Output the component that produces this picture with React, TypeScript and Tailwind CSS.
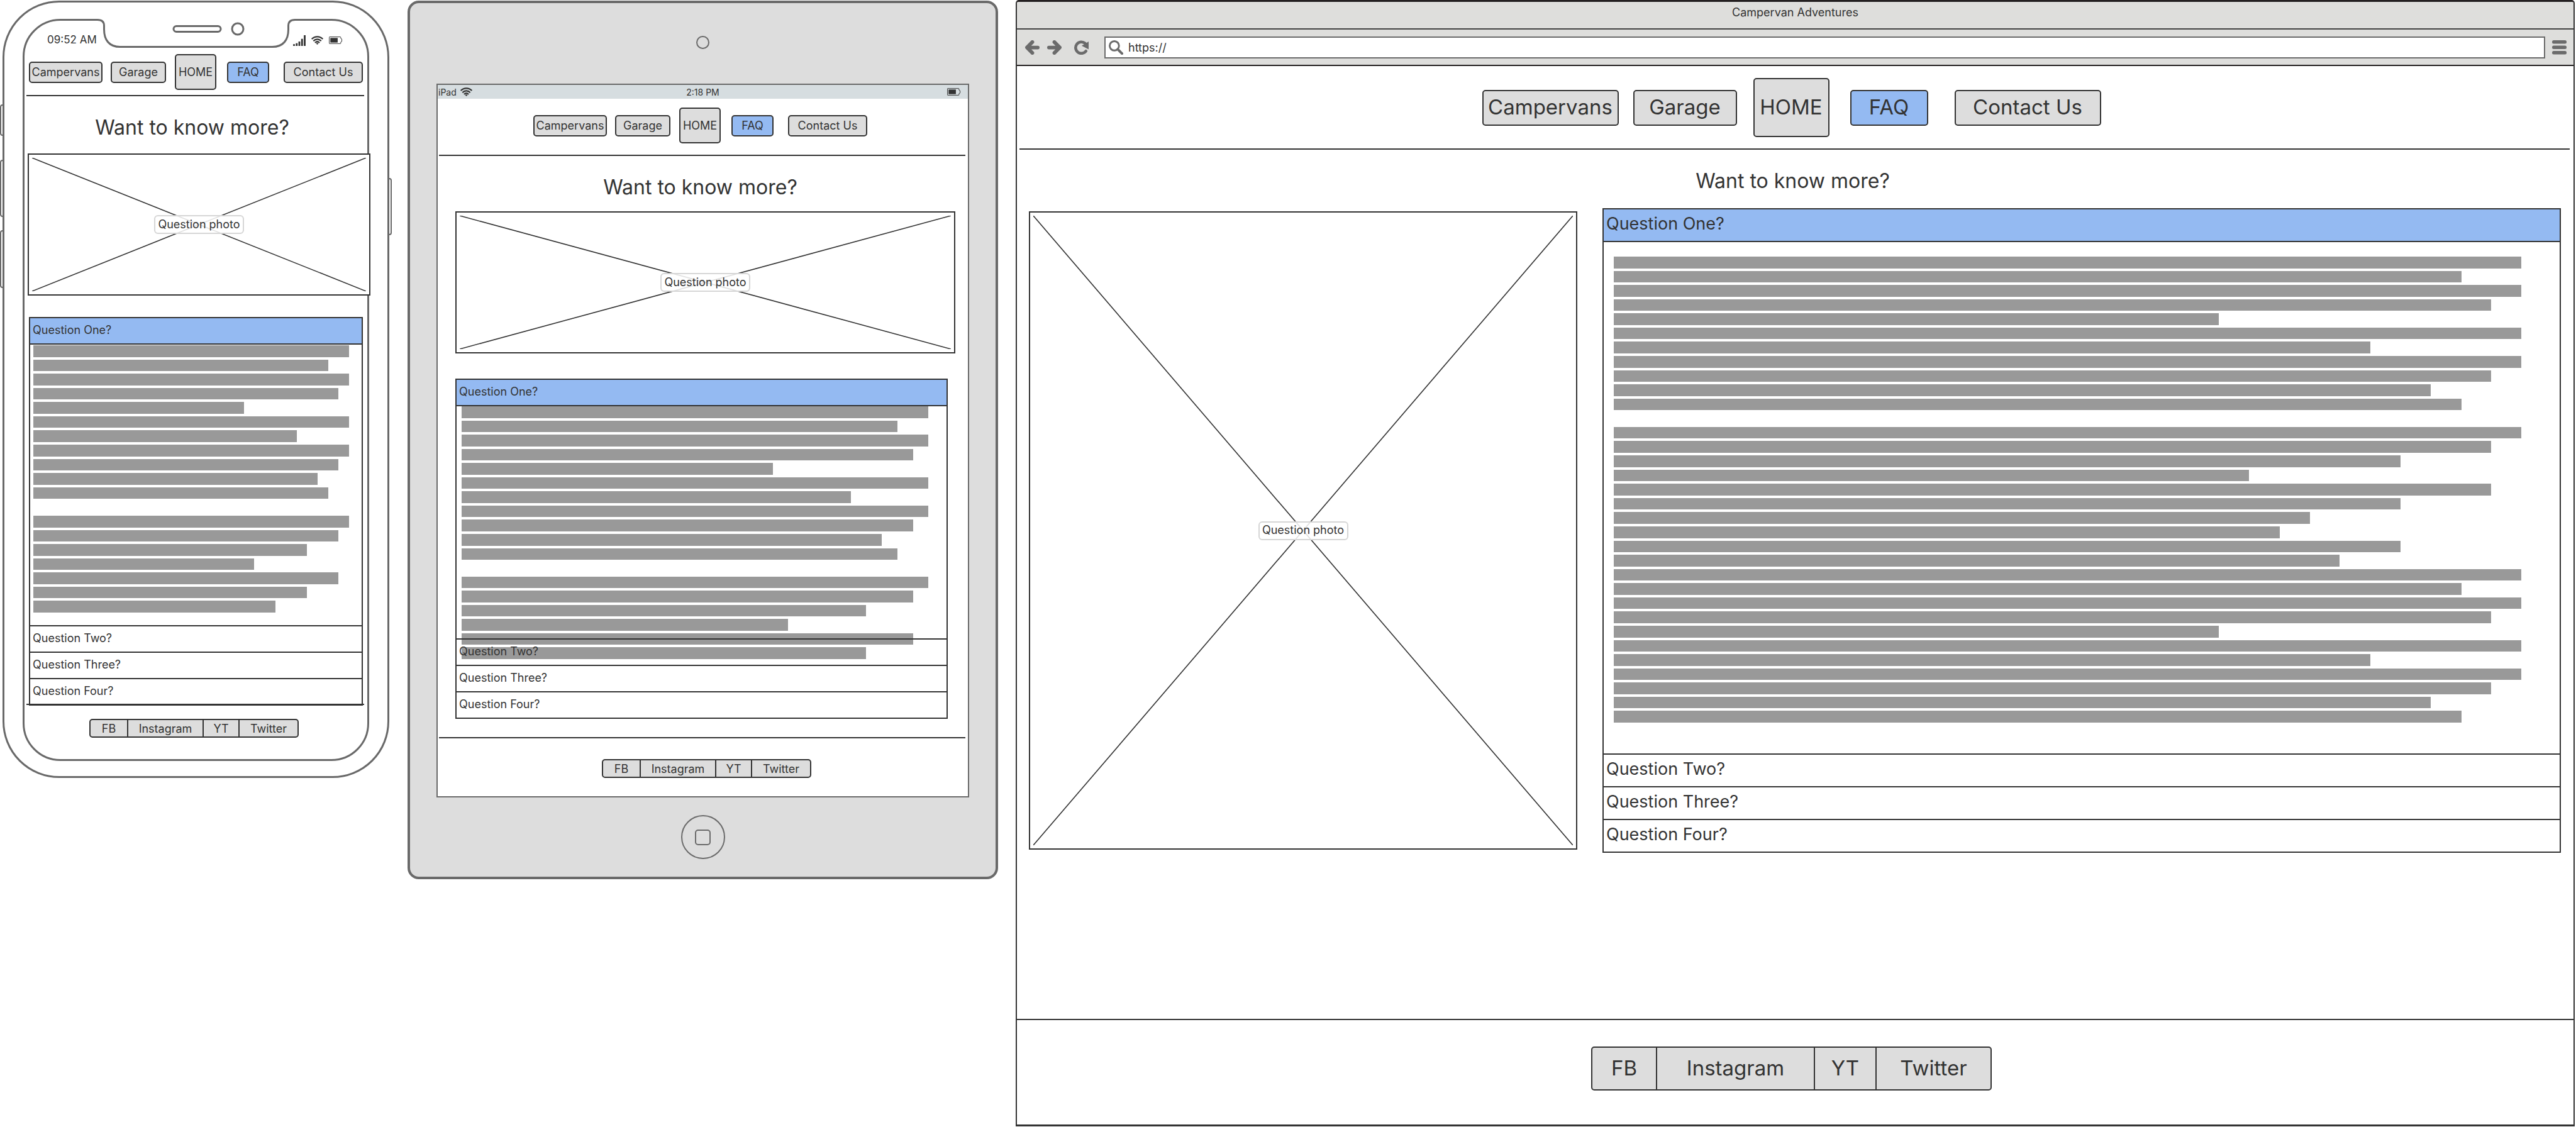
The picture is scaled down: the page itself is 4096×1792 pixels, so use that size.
import React from "react";
import clsx from "clsx";

type Size = "sm" | "lg";

/* Widths of the placeholder text lines, in percent; 0 is a paragraph break. */
const PARAGRAPH = [100, 93.4, 100, 96.7, 66.7, 100, 83.4, 100, 96.7, 90, 93.4, 0];
const PHONE_LINES = [...PARAGRAPH, 100, 96.7, 86.7, 70, 96.7, 86.7, 76.7];
const TABLET_LINES = [...PARAGRAPH, 100, 96.7, 86.7, 70, 96.7, 86.7];
const DESKTOP_LINES = [
  ...PARAGRAPH, 100, 96.7, 86.7, 70, 96.7, 86.7, 76.7, 73.4, 86.7, 80,
  100, 93.4, 100, 96.7, 66.7, 100, 83.4, 100, 96.7, 90, 93.4,
];

const NAV = [
  { label: "Campervans", sm: "w-[117px]", lg: "w-[217px]" },
  { label: "Garage", sm: "w-[88px] ml-[13px]", lg: "w-[165px] ml-[23px]" },
  { label: "HOME", sm: "w-[66px] ml-[14px]", lg: "w-[121px] ml-[26px]" },
  { label: "FAQ", sm: "w-[67px] ml-[17px]", lg: "w-[124px] ml-[33px]" },
  { label: "Contact Us", sm: "w-[126px] ml-[23px]", lg: "w-[233px] ml-[42px]" },
];

const SOCIAL = [
  { label: "FB", sm: "w-[60px]", lg: "w-[103px]" },
  { label: "Instagram", sm: "w-[120px]", lg: "w-[251px]" },
  { label: "YT", sm: "w-[57px]", lg: "w-[98px]" },
  { label: "Twitter", sm: "w-[92px]", lg: "w-[181px]" },
];

function Nav({ size }: { size: Size }) {
  return (
    <nav className="flex items-center justify-center">
      {NAV.map((item) => (
        <button
          key={item.label}
          className={clsx(
            "shrink-0 whitespace-nowrap rounded-[5px] border-2 border-[#333]",
            item.label === "FAQ" ? "bg-[#94baf2]" : "bg-[#ddd]",
            size === "sm" ? "text-[18px]" : "text-[33px]",
            size === "sm"
              ? item.label === "HOME" ? "h-[57px]" : "h-[34px]"
              : item.label === "HOME" ? "h-[94px]" : "h-[57px]",
            item[size],
          )}
        >
          {item.label}
        </button>
      ))}
    </nav>
  );
}

function Social({ size }: { size: Size }) {
  return (
    <div className="flex justify-center">
      <div
        className={clsx(
          "flex divide-x-2 divide-[#333] overflow-hidden rounded-[5px] border-2 border-[#333] bg-[#ddd]",
          size === "sm" ? "h-[30px] text-[18px]" : "h-[70px] text-[33px]",
        )}
      >
        {SOCIAL.map((item) => (
          <button key={item.label} className={clsx("flex items-center justify-center", item[size])}>
            {item.label}
          </button>
        ))}
      </div>
    </div>
  );
}

function Photo({ className }: { className?: string }) {
  return (
    <div className={clsx("relative flex items-center justify-center border-2 border-[#333] bg-white", className)}>
      <svg
        className="absolute inset-[5px] h-[calc(100%-10px)] w-[calc(100%-10px)]"
        viewBox="0 0 100 100"
        preserveAspectRatio="none"
        aria-hidden="true"
      >
        <path d="M0 0L100 100M100 0L0 100" stroke="#333" strokeWidth="1.6" vectorEffect="non-scaling-stroke" />
      </svg>
      <span className="relative flex h-[30px] w-[143px] items-center justify-center whitespace-nowrap rounded-md border-2 border-[#d6d6d6] bg-white/85 pb-0.5 text-[18px]">
        Question photo
      </span>
    </div>
  );
}

function Lines({ widths, className }: { widths: number[]; className: string }) {
  return (
    <div className={clsx("grid auto-rows-fr gap-1", className)}>
      {widths.map((w, i) => (
        <div key={i} className="bg-[#999]" style={{ width: `${w}%` }} />
      ))}
    </div>
  );
}

function Accordion({
  size,
  panel,
  className,
  children,
}: {
  size: Size;
  panel: string;
  className?: string;
  children: React.ReactNode;
}) {
  const row = clsx(
    "relative flex w-full items-center border-t-2 border-[#333] pl-1 pb-1 text-left",
    size === "sm" ? "h-[42px] text-[18px]" : "h-[52px] text-[27px]",
  );
  return (
    <div className={clsx("border-x-2 border-b-2 border-[#333]", className)}>
      <button className={clsx(row, "bg-[#94baf2]")} aria-expanded="true">
        Question One?
      </button>
      <div className={clsx("border-t-2 border-[#333]", panel)}>{children}</div>
      {["Question Two?", "Question Three?", "Question Four?"].map((q) => (
        <button key={q} className={row} aria-expanded="false">
          {q}
        </button>
      ))}
    </div>
  );
}

function Rule({ className }: { className?: string }) {
  return <hr className={clsx("border-t-2 border-[#333]", className)} />;
}

function Title({ className }: { className: string }) {
  return (
    <h1 className={clsx("flex items-center justify-center text-[32px] leading-10", className)}>
      Want to know more?
    </h1>
  );
}

function SignalIcon() {
  return (
    <svg className="h-[17px] w-5" viewBox="0 0 84 72" fill="#333" aria-hidden="true">
      <path d="M0 60h12v12H0zM18 54h12v18H18zM36 42h12v30H36zM54 24h12v48H54zM72 0h12v72H72z" />
    </svg>
  );
}

function WifiIcon() {
  return (
    <svg className="h-[14px] w-[19px]" viewBox="0 0 80 58" fill="none" stroke="#333" strokeWidth="9" aria-hidden="true">
      <path d="M3 21C24 0 56 0 77 21M14 34C29 18 51 18 66 34M25 46C34 37 46 37 55 46" />
      <path d="M31 50Q40 44 49 50L40 58Z" fill="#333" stroke="none" />
    </svg>
  );
}

function BatteryIcon() {
  return (
    <svg className="h-3 w-[21px]" viewBox="0 0 86 48" aria-hidden="true">
      <path d="M4 2H74Q77 2 77 5V12L84 16V32L77 36V43Q77 46 74 46H4Q2 46 2 43V5Q2 2 4 2Z" fill="none" stroke="#333" strokeWidth="4" />
      <path d="M9 9H57V39H9Z" fill="#333" />
    </svg>
  );
}

function ArrowIcon({ flip }: { flip?: boolean }) {
  return (
    <svg
      className={clsx("size-[23px]", flip && "-scale-x-100")}
      viewBox="0 0 96 96"
      fill="none"
      stroke="#6b6b6b"
      strokeWidth="24"
      strokeLinecap="round"
      strokeLinejoin="round"
      aria-hidden="true"
    >
      <path d="M84 48H20M48 12L12 48L48 84" />
    </svg>
  );
}

function ReloadIcon() {
  return (
    <svg className="size-[23px]" viewBox="0 0 96 96" aria-hidden="true">
      <path d="M78 72A38 38 0 1 1 72 20" fill="none" stroke="#6b6b6b" strokeWidth="19" strokeLinecap="round" />
      <path d="M96 8V60L50 36Z" fill="#6b6b6b" />
    </svg>
  );
}

function SearchIcon() {
  return (
    <svg className="size-[23px] shrink-0" viewBox="0 0 96 96" fill="none" stroke="#6b6b6b" aria-hidden="true">
      <circle cx="37" cy="37" r="31" strokeWidth="12" />
      <path d="M60 60L88 88" strokeWidth="17" strokeLinecap="round" />
    </svg>
  );
}

function MenuIcon() {
  return (
    <svg className="size-[23px]" viewBox="0 0 46 46" fill="#6b6b6b" aria-hidden="true">
      <rect width="46" height="11" rx="5" />
      <rect y="17" width="46" height="11" rx="5" />
      <rect y="34" width="46" height="11" rx="5" />
    </svg>
  );
}

function Phone() {
  return (
    <section className="relative pl-1 pr-1 pt-px">
      <i className="absolute left-0 top-[166px] h-[50px] w-2 rounded-l-sm border-2 border-[#696969]" />
      <i className="absolute left-0 top-[254px] h-[91px] w-2 rounded-l-sm border-2 border-[#696969]" />
      <i className="absolute left-0 top-[366px] h-[92px] w-2 rounded-l-sm border-2 border-[#696969]" />
      <i className="absolute right-0 top-[283px] h-[91px] w-2 rounded-r-sm border-2 border-[#696969]" />
      <div className="relative rounded-[90px] border-[3px] border-[#696969] bg-white px-[29px] pb-6 pt-[26px]">
        <div className="relative rounded-[60px] border-[3px] border-[#696969]">
          <svg
            className="absolute -top-[3px] left-1/2 h-[50px] w-[324px] -translate-x-1/2"
            viewBox="0 0 324 50"
            fill="none"
            stroke="#696969"
            strokeWidth="3"
            aria-hidden="true"
          >
            <path d="M5 0H319V3H5Z" fill="#fff" stroke="none" />
            <path d="M0 1.5H5Q15.500 1.500 15.500 11V17C15.500 34 24 44.500 41 44.500H283C300 44.500 308.500 34 308.500 17V11Q308.500 1.500 319 1.500H324" />
            <rect x="126" y="11.500" width="75" height="9" rx="4.500" />
            <circle cx="228" cy="16" r="9" />
          </svg>
          <div className="flex h-[53px] items-center justify-between pb-px pl-9 pr-10 pt-2.5">
            <span className="text-[17px]">09:52 AM</span>
            <span className="flex items-center gap-[9px]">
              <SignalIcon />
              <WifiIcon />
              <BatteryIcon />
            </span>
          </div>
          <Nav size="sm" />
          <Rule className="ml-[3px] mr-[5px] mt-2" />
          <Title className="h-[91px] pr-3 pt-2" />
          <Photo className="-mr-[5px] ml-[5px] h-[226px]" />
          <Accordion size="sm" panel="h-[448px] pl-[5px] pr-5" className="mx-[7px] mt-[34px]">
            <Lines widths={PHONE_LINES} className="h-[426px] pt-px" />
          </Accordion>
          <Rule className="-mt-[3px] ml-[3px] mr-[5px]" />
          <div className="pb-[34px] pr-1.5 pt-[22px]">
            <Social size="sm" />
          </div>
        </div>
      </div>
    </section>
  );
}

function Tablet() {
  return (
    <section className="pt-px">
      <div className="rounded-[18px] border-4 border-[#6a6a6a] bg-[#ddd] px-[42px] pb-7">
        <div className="flex h-[128px] items-center justify-center pb-1">
          <i className="size-[21px] rounded-full border-2 border-[#6a6a6a]" />
        </div>
        <div className="border-2 border-[#6a6a6a] bg-white">
          <div className="grid h-[22px] grid-cols-3 items-center bg-[#d6dde0] text-[14px]">
            <span className="flex items-center gap-1.5 pl-px">
              iPad <WifiIcon />
            </span>
            <span className="text-center">2:18 PM</span>
            <span className="flex justify-end pr-3">
              <BatteryIcon />
            </span>
          </div>
          <div className="pr-2 pt-[14px]">
            <Nav size="sm" />
          </div>
          <Rule className="ml-0.5 mr-1 mt-[18px]" />
          <Title className="h-[88px] pr-2 pt-3" />
          <Photo className="ml-7 mr-5 h-[226px]" />
          <Accordion size="sm" panel="h-[371px] pl-2 pr-[29px]" className="ml-7 mr-8 mt-10">
            <Lines widths={TABLET_LINES} className="h-[402px]" />
          </Accordion>
          <Rule className="ml-0.5 mr-1 mt-[29px]" />
          <div className="pb-[29px] pl-3 pt-[33px]">
            <Social size="sm" />
          </div>
        </div>
        <div className="flex justify-center pt-7">
          <button
            aria-label="Home"
            className="flex size-[70px] items-center justify-center rounded-full border-2 border-[#6a6a6a]"
          >
            <i className="size-[25px] rounded-[5px] border-2 border-[#6a6a6a]" />
          </button>
        </div>
      </div>
    </section>
  );
}

function Desktop() {
  return (
    <section className="flex min-h-[calc(100vh-1px)] flex-col rounded-t-[5px] border-x-2 border-b-[3px] border-t-[3px] border-[#333] border-t-[#231f20]">
      <header className="rounded-t-sm bg-[#dededc]">
        <div className="flex h-[44px] items-center justify-center border-b-2 border-[#444] pb-2.5 text-[18px]">
          Campervan Adventures
        </div>
        <div className="flex h-[58px] items-center border-b-2 border-[#231f20] pl-[13px] pr-[11px]">
          <button aria-label="Back">
            <ArrowIcon />
          </button>
          <button aria-label="Forward" className="ml-3">
            <ArrowIcon flip />
          </button>
          <button aria-label="Reload" className="ml-5">
            <ReloadIcon />
          </button>
          <label className="ml-[25px] flex h-[35px] flex-1 items-center border-2 border-[#6b6b6b] bg-white pl-[5px]">
            <SearchIcon />
            <input
              aria-label="Address"
              defaultValue="https://"
              className="ml-2 min-w-0 flex-1 bg-transparent text-[18px] outline-none"
            />
          </label>
          <button aria-label="Menu" className="ml-[11px]">
            <MenuIcon />
          </button>
        </div>
      </header>
      <div className="pr-3 pt-[19px]">
        <Nav size="lg" />
      </div>
      <Rule className="ml-1 mr-1.5 mt-[18px]" />
      <Title className="h-[93px] pr-2 pt-1.5" />
      <main className="grid grid-cols-[872fr_1524fr] gap-10 pl-[19px] pr-5">
        <Photo className="my-[5px]" />
        <Accordion size="lg" panel="h-[815px] pl-4 pr-[61px] pt-[23px]">
          <Lines widths={DESKTOP_LINES} className="h-[741px]" />
        </Accordion>
      </main>
      <footer className="mt-auto">
        <Rule />
        <div className="pb-[54px] pr-3 pt-[42px]">
          <Social size="lg" />
        </div>
      </footer>
    </section>
  );
}

export default function App() {
  return (
    <div className="min-h-screen bg-white pr-0.5 font-['Inter','Noto_Sans',sans-serif] text-[#333]">
      <div className="grid grid-cols-[648fr_967fr_2479fr] items-start">
        <div className="pr-[25px]">
          <Phone />
        </div>
        <div className="pr-7">
          <Tablet />
        </div>
        <Desktop />
      </div>
    </div>
  );
}
